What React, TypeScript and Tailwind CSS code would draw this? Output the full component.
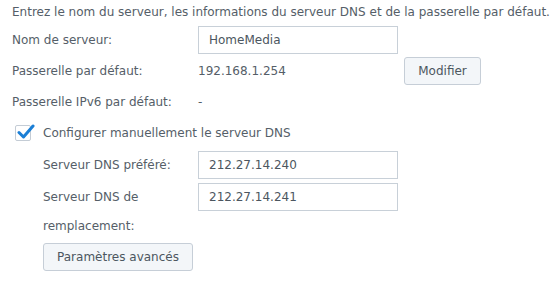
import React from 'react';

const font = { fontFamily: '"DejaVu Sans", Verdana, sans-serif' };

function Field({ value }: { value: string }) {
  return (
    <div className="w-[200px] h-[28px] border border-[#c8d0d8] bg-white pl-[10px] flex items-center text-[#4c5660]">
      {value}
    </div>
  );
}

function Button({ label, className }: { label: string; className?: string }) {
  return (
    <div
      className={`h-[28px] border border-[#c6ced7] rounded-[3px] bg-[#f3f6f9] flex items-center justify-center text-[#4c5660] ${className ?? ''}`}
    >
      {label}
    </div>
  );
}

export default function App() {
  return (
    <div
      className="w-[558px] h-[281px] bg-white text-[12px] text-[#555e68] pl-3 overflow-hidden"
      style={font}
    >
      <div className="h-[24px] flex items-center">
        Entrez le nom du serveur, les informations du serveur DNS et de la passerelle par défaut.
      </div>

      {/* Nom de serveur */}
      <div className="h-[31px] flex items-center">
        <div className="w-[186px]">Nom de serveur:</div>
        <Field value="HomeMedia" />
      </div>

      {/* Passerelle */}
      <div className="h-[32px] flex items-center">
        <div className="w-[186px]">Passerelle par défaut:</div>
        <div className="w-[206px]">192.168.1.254</div>
        <Button label="Modifier" className="w-[77px]" />
      </div>

      {/* IPv6 */}
      <div className="h-[30px] flex items-center">
        <div className="w-[186px]">Passerelle IPv6 par défaut:</div>
        <div>-</div>
      </div>

      {/* Checkbox */}
      <div className="h-[32px] flex items-center">
        <div className="relative w-[16px] h-[16px] ml-[3px] border border-[#c4ccd5] rounded-[2px] bg-white">
          <svg
            className="absolute left-[1px] top-[-3px]"
            width="18"
            height="18"
            viewBox="0 0 18 18"
          >
            <path
              d="M2 9.5 L6.5 14 L16 3"
              fill="none"
              stroke="#1b7fd6"
              strokeWidth="3"
              strokeLinecap="round"
              strokeLinejoin="round"
            />
          </svg>
        </div>
        <div className="ml-[12px]">Configurer manuellement le serveur DNS</div>
      </div>

      <div className="pl-[31px]">
        <div className="h-[32px] flex items-center">
          <div className="w-[155px]">Serveur DNS préféré:</div>
          <Field value="212.27.14.240" />
        </div>
        <div className="flex items-start">
          <div className="w-[155px] pt-[2px] leading-[29px]">Serveur DNS de remplacement:</div>
          <div className="mt-[2px]">
            <Field value="212.27.14.241" />
          </div>
        </div>
        <Button label="Paramètres avancés" className="w-[150px] h-[27px] mt-[2px]" />
      </div>
    </div>
  );
}
